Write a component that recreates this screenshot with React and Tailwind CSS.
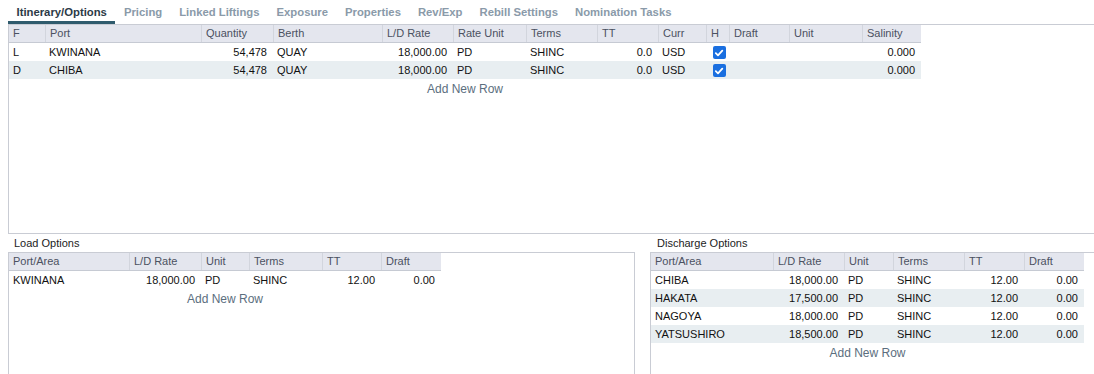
import React from "react";

const tabs = [
  "Itinerary/Options",
  "Pricing",
  "Linked Liftings",
  "Exposure",
  "Properties",
  "Rev/Exp",
  "Rebill Settings",
  "Nomination Tasks",
];

// main itinerary grid
const mainCols = [
  { label: "F", w: "w-[36px]" },
  { label: "Port", w: "w-[156px]" },
  { label: "Quantity", w: "w-[72px]", right: true },
  { label: "Berth", w: "w-[109px]" },
  { label: "L/D Rate", w: "w-[71px]", right: true },
  { label: "Rate Unit", w: "w-[73px]" },
  { label: "Terms", w: "w-[71px]" },
  { label: "TT", w: "w-[61px]", right: true },
  { label: "Curr", w: "w-[48px]" },
  { label: "H", w: "w-[23px]", check: true },
  { label: "Draft", w: "w-[60px]" },
  { label: "Unit", w: "w-[73px]" },
  { label: "Salinity", w: "w-[59px]", right: true },
];

const mainRows = [
  ["L", "KWINANA", "54,478", "QUAY", "18,000.00", "PD", "SHINC", "0.0", "USD", true, "", "", "0.000"],
  ["D", "CHIBA", "54,478", "QUAY", "18,000.00", "PD", "SHINC", "0.0", "USD", true, "", "", "0.000"],
];

const loadCols = [
  { label: "Port/Area", w: "w-[120px]" },
  { label: "L/D Rate", w: "w-[72px]", right: true },
  { label: "Unit", w: "w-[48px]" },
  { label: "Terms", w: "w-[73px]" },
  { label: "TT", w: "w-[59px]", right: true },
  { label: "Draft", w: "w-[60px]", right: true },
];

const dischCols = [
  { label: "Port/Area", w: "w-[122px]" },
  { label: "L/D Rate", w: "w-[71px]", right: true },
  { label: "Unit", w: "w-[49px]" },
  { label: "Terms", w: "w-[71px]" },
  { label: "TT", w: "w-[60px]", right: true },
  { label: "Draft", w: "w-[60px]", right: true },
];

const loadRows = [["KWINANA", "18,000.00", "PD", "SHINC", "12.00", "0.00"]];

const dischRows = [
  ["CHIBA", "18,000.00", "PD", "SHINC", "12.00", "0.00"],
  ["HAKATA", "17,500.00", "PD", "SHINC", "12.00", "0.00"],
  ["NAGOYA", "18,000.00", "PD", "SHINC", "12.00", "0.00"],
  ["YATSUSHIRO", "18,500.00", "PD", "SHINC", "12.00", "0.00"],
];

const Check = () => (
  <span className="w-[13px] h-[13px] rounded-[2px] bg-[#1a6fe0] flex items-center justify-center">
    <svg width="10" height="10" viewBox="0 0 10 10">
      <path d="M1.8 5.2 L4 7.3 L8.3 2.6" fill="none" stroke="#fff" strokeWidth="1.8" strokeLinecap="round" strokeLinejoin="round" />
    </svg>
  </span>
);

const Grid = ({ cols, rows }) => (
  <div className="w-fit">
    <div className="flex h-[18px] bg-[#e4e6ee] border-b border-[#c6cad3]">
      {cols.map((c, i) => (
        <div
          key={i}
          className={`${c.w} shrink-0 flex items-center pl-1 text-[#4b5161] ${i > 0 ? "border-l border-[#d2d5dd]" : ""}`}
        >
          {c.label}
        </div>
      ))}
    </div>
    {rows.map((r, ri) => (
      <div key={ri} className={`flex h-[18px] ${ri % 2 === 1 ? "bg-[#e8eef1]" : "bg-white"}`}>
        {cols.map((c, i) => (
          <div
            key={i}
            className={`${c.w} shrink-0 flex items-center pt-px text-[#111] ${
              c.right ? "justify-end pr-[6px]" : c.check ? "justify-center pl-[3px]" : "pl-1"
            }`}
          >
            {c.check ? r[i] && <Check /> : r[i]}
          </div>
        ))}
      </div>
    ))}
    <div className="h-[20px] flex items-center justify-center text-[12px] text-[#5b6e7e]">
      Add New Row
    </div>
  </div>
);

export default function App() {
  return (
    <div
      className="w-[1094px] h-[374px] overflow-hidden bg-white pl-2 text-[11px] flex flex-col"
      style={{ fontFamily: '"Liberation Sans", Arial, sans-serif' }}
    >
      {/* tabs */}
      <div className="flex h-[24px] shrink-0">
        {tabs.map((t, i) => (
          <div
            key={t}
            className={`relative h-full flex items-center px-[8.5px] font-bold text-[11.3px] ${
              i === 0 ? "text-[#2c3a47]" : "text-[#8a9aa9]"
            }`}
          >
            {t}
            {i === 0 && <span className="absolute left-0 right-0 bottom-0 h-[3px] bg-[#2f5b6d]" />}
          </div>
        ))}
      </div>

      {/* itinerary panel */}
      <div className="h-[210px] shrink-0 border-t border-l border-b border-[#c9ccd4]">
        <Grid cols={mainCols} rows={mainRows} />
      </div>

      {/* options */}
      <div className="flex flex-1 gap-[15px] min-h-0">
        <div className="w-[627px] flex flex-col">
          <div className="h-[18px] flex items-center pt-px pl-[6px] text-[#1c1c1c]">Load Options</div>
          <div className="flex-1 border-t border-l border-r border-[#c9ccd4]">
            <Grid cols={loadCols} rows={loadRows} />
          </div>
        </div>
        <div className="flex-1 flex flex-col">
          <div className="h-[18px] flex items-center pt-px pl-[7px] text-[#1c1c1c]">Discharge Options</div>
          <div className="flex-1 border-t border-l border-[#c9ccd4]">
            <Grid cols={dischCols} rows={dischRows} />
          </div>
        </div>
      </div>
    </div>
  );
}
